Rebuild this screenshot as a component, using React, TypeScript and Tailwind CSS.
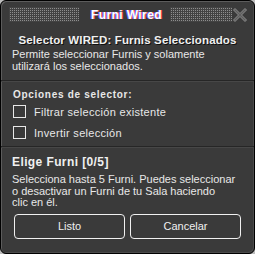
import React from 'react';

// dotted texture of the title bar, drawn as 1px dots on a 2px grid
function Dots({ cols, gridClass }: { cols: number; gridClass: string }) {
  return (
    <div className="shrink-0 bg-[#434343] py-[1px] pl-[1px]">
      <div className={`grid gap-[1px] ${gridClass}`}>
        {Array.from({ length: cols * 7 }).map((_, i) => (
          <div key={i} className="w-px h-px bg-[#8e8e8e]" />
        ))}
      </div>
    </div>
  );
}

function Checkbox({ label }: { label: string }) {
  return (
    <div className="flex items-center gap-[8px] h-[21px]">
      <div className="w-[13px] h-[13px] border border-[#e8e8e8]" />
      <span className="text-[11px] leading-[12px] tracking-[0.3px] text-[#e8e8e8]">{label}</span>
    </div>
  );
}

export default function App() {
  return (
    <div className="w-[255px] h-[254px] bg-[#bdbdbd] font-['Liberation_Sans',sans-serif]">
      <div className="w-full h-full rounded-[6px] border border-black bg-[#3a3a3a] flex flex-col overflow-hidden shadow-[inset_1px_1px_0_#5c5c5c,inset_-1px_-1px_0_#4a4a4a]">
        {/* Title bar */}
        <div className="shrink-0 flex items-center h-[27px] pl-[8px] pr-[6px]">
          <Dots cols={35} gridClass="grid-cols-[repeat(35,1px)]" />
          <span className="flex-1 pl-[4px] text-center font-bold text-[12px] leading-[14px] tracking-[0.4px] text-white [text-shadow:-1px_0_#6b6bff,1px_0_#ff5050]">
            Furni Wired
          </span>
          <Dots cols={31} gridClass="grid-cols-[repeat(31,1px)]" />
          <svg width="16" height="16" viewBox="0 0 16 16" className="shrink-0">
            <path
              d="M3 1.5 L8 6.5 L13 1.5 L14.5 3 L9.5 8 L14.5 13 L13 14.5 L8 9.5 L3 14.5 L1.5 13 L6.5 8 L1.5 3 Z"
              fill="#5e5e5e"
              stroke="#8c8c8c"
              strokeWidth="1"
            />
          </svg>
        </div>

        {/* Header */}
        <div className="shrink-0 px-[11px] pt-[6px] pb-[8px] border-b border-[#262626]">
          <p className="text-center font-bold text-[11.5px] leading-[12px] tracking-[0.15px] text-[#f0f0f0] [text-shadow:1px_1px_0_#111]">
            Selector WIRED: Furnis Seleccionados
          </p>
          <p className="mt-[2px] text-[11px] leading-[12px] text-[#e8e8e8]">
            Permite seleccionar Furnis y solamente
            <br />
            utilizará los seleccionados.
          </p>
        </div>

        {/* Options */}
        <div className="shrink-0 px-[12px] pt-[7px] pb-[3px] border-t border-[#474747] border-b border-b-[#262626]">
          <p className="font-bold text-[10px] leading-[12px] tracking-[0.7px] text-[#e8e8e8]">Opciones de selector:</p>
          <Checkbox label="Filtrar selección existente" />
          <Checkbox label="Invertir selección" />
        </div>

        {/* Furni */}
        <div className="shrink-0 px-[11px] pt-[8px] border-t border-[#474747]">
          <p className="font-bold text-[12px] leading-[12px] tracking-[0.4px] text-[#f0f0f0]">Elige Furni [0/5]</p>
          <p className="mt-[6px] whitespace-nowrap text-[11px] leading-[11.5px] text-[#e8e8e8]">
            Selecciona hasta 5 Furni. Puedes seleccionar
            <br />
            o desactivar un Furni de tu Sala haciendo
            <br />
            clic en él.
          </p>
          <div className="flex gap-[5px] mt-[5px] px-[2px]">
            <button className="flex-1 h-[25px] rounded-[4px] border border-[#f0f0f0] text-[11px] text-[#f0f0f0]">
              Listo
            </button>
            <button className="flex-1 h-[25px] rounded-[4px] border border-[#f0f0f0] text-[11px] text-[#f0f0f0]">
              Cancelar
            </button>
          </div>
        </div>
      </div>
    </div>
  );
}
